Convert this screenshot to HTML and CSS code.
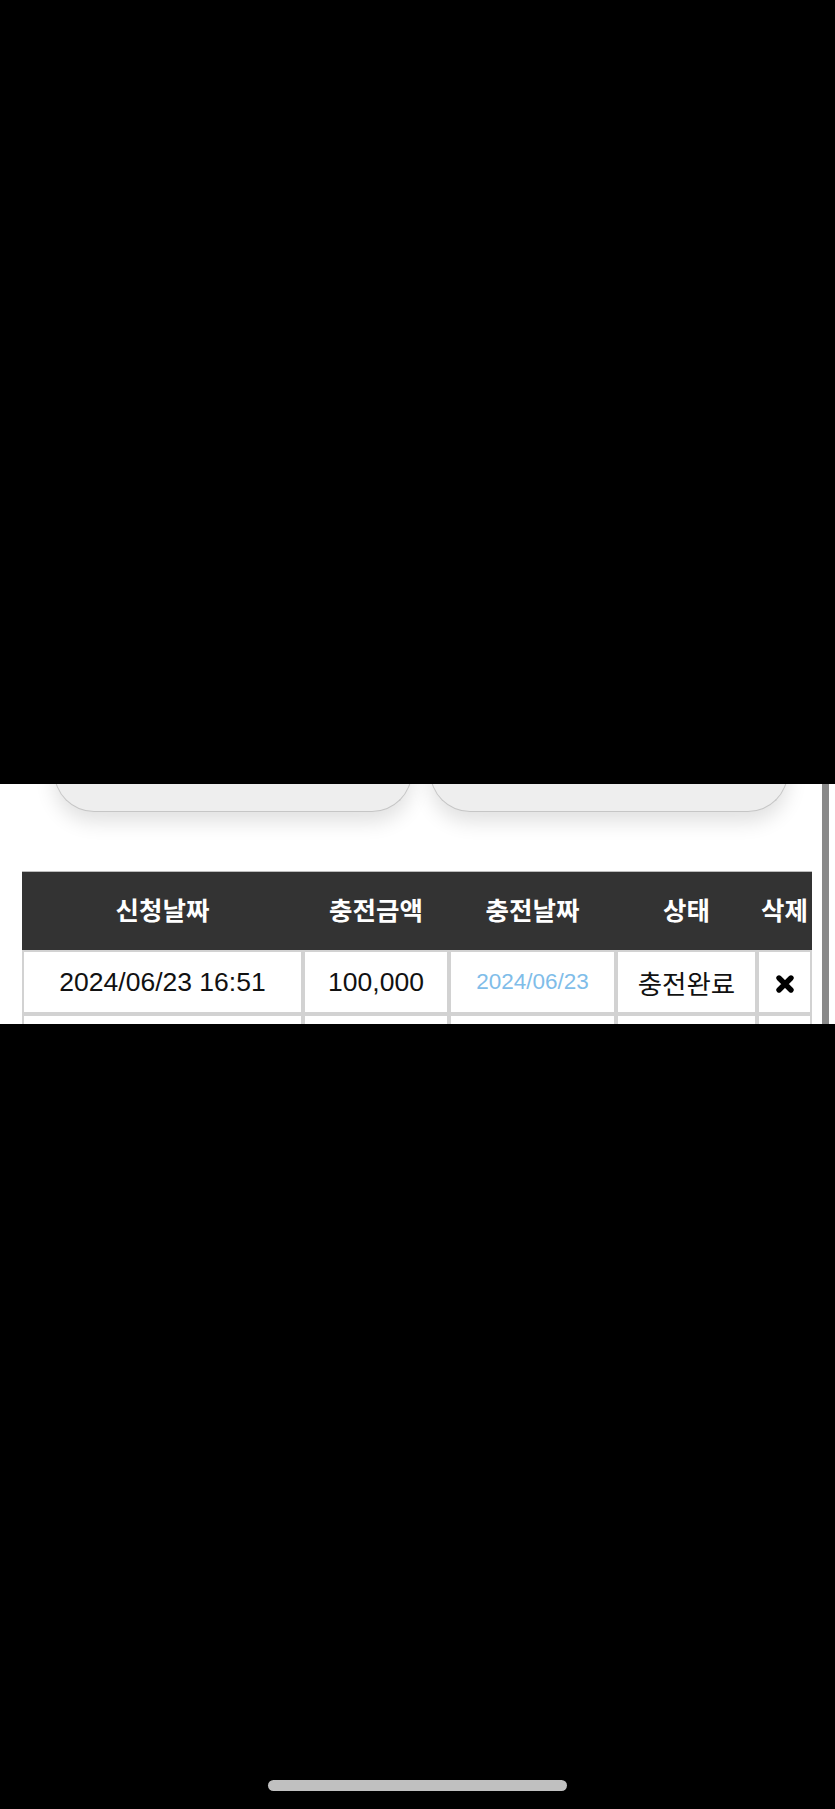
FILE: index.html
```html
<!DOCTYPE html>
<html lang="ko">
<head>
    <meta charset="UTF-8">
    <meta name="viewport" content="width=device-width, initial-scale=1.0">
    <title>충전내역</title>
    <link rel="stylesheet" href="styles.css">
</head>
<body>
    <div class="cover-top"></div>

    <div class="window">
        <div class="page">
            <div class="card-row">
                <div class="card"></div>
                <div class="card"></div>
            </div>

            <table class="history">
                <thead>
                    <tr>
                        <th class="col-req">신청날짜</th>
                        <th class="col-amount">충전금액</th>
                        <th class="col-date">충전날짜</th>
                        <th class="col-state">상태</th>
                        <th class="col-del">삭제</th>
                    </tr>
                </thead>
                <tbody>
                    <tr>
                        <td>2024/06/23 16:51</td>
                        <td>100,000</td>
                        <td class="done-date">2024/06/23</td>
                        <td>충전완료</td>
                        <td>
                            <svg class="del-icon" viewBox="0 0 20 20" width="20" height="20">
                                <path d="M4 4 L16 16 M16 4 L4 16" />
                            </svg>
                        </td>
                    </tr>
                    <!-- 다음 줄은 화면 아래로 잘려 있음 -->
                    <tr class="next-row">
                        <td></td>
                        <td></td>
                        <td></td>
                        <td></td>
                        <td></td>
                    </tr>
                </tbody>
            </table>
        </div>
        <div class="scrollbar"></div>
    </div>

    <div class="cover-bottom">
        <div class="home-bar"></div>
    </div>
</body>
</html>
```

FILE: styles.css
```css
body {
    margin: 0;
    background-color: #000;
    font-family: 'Liberation Sans', 'Noto Sans CJK KR', sans-serif;
}
.cover-top {
    height: 784px;
    background-color: #000;
}
.window {
    height: 240px;
    background-color: #fff;
    overflow: hidden;
    display: flex;
}
.page {
    width: 822px;
}
.scrollbar {
    width: 7px;
    background-color: #898989;
}
.card-row {
    display: flex;
    gap: 18px;
    padding: 0 30px 0 54px;
    margin-top: -92px;
}
.card {
    width: 356px;
    height: 119px;
    background-color: #eeeeee;
    border: 1px solid #c6c6c6;
    border-top: none;
    border-radius: 0 0 40px 40px;
    box-shadow: 0 10px 20px rgba(0, 0, 0, 0.12);
}
.history {
    margin: 59px 0 0 22px;
    width: 790px;
    table-layout: fixed;
    border-collapse: separate;
    border-spacing: 0;
}
.history th {
    height: 73px;
    padding: 0 0 5px;
    background-color: #333333;
    color: #fff;
    font-size: 25.5px;
    font-weight: bold;
    text-align: center;
    border-top: 1px solid #bdbdbd;
    white-space: nowrap;
}
.col-req { width: 281px; }
.col-amount { width: 146px; }
.col-date { width: 167px; }
.col-state { width: 141px; }
.col-del { width: 55px; }
.history td {
    height: 60px;
    padding: 0;
    border: 2px solid #d2d2d2;
    background-color: #fff;
    color: #111;
    font-size: 26.5px;
    text-align: center;
    vertical-align: middle;
    white-space: nowrap;
}
.history td.done-date {
    color: #7fbde9;
    font-size: 22.5px;
}
.del-icon {
    display: block;
    margin: 4px auto 0;
    fill: none;
    stroke: #000;
    stroke-width: 5.4;
    stroke-linecap: round;
}
.cover-bottom {
    height: 785px;
    background-color: #000;
    display: flex;
    justify-content: center;
}
.home-bar {
    margin-top: 756px;
    width: 299px;
    height: 11px;
    border-radius: 6px;
    background-color: #c0c0c0;
}
```
